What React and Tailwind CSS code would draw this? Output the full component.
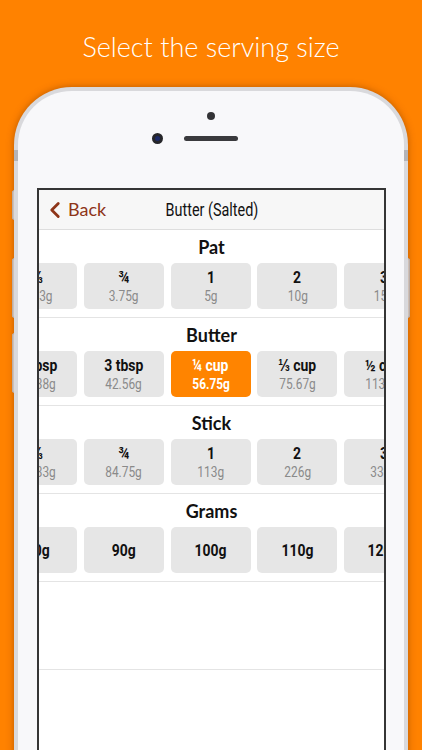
import { ChevronLeft } from "lucide-react";

const NARROW = { fontFamily: 'Roboto, "Liberation Sans", sans-serif' };
const ROUND = { fontFamily: 'Lato, "Noto Sans", sans-serif' };

const SECTIONS = [
  {
    name: "Pat",
    items: [
      { top: "⅔", sub: "3.33g" },
      { top: "¾", sub: "3.75g" },
      { top: "1", sub: "5g" },
      { top: "2", sub: "10g" },
      { top: "3", sub: "15g" },
    ],
  },
  {
    name: "Butter",
    items: [
      { top: "2 tbsp", sub: "28.38g" },
      { top: "3 tbsp", sub: "42.56g" },
      { top: "¼ cup", sub: "56.75g", active: true },
      { top: "⅓ cup", sub: "75.67g" },
      { top: "½ cup", sub: "113.5g" },
    ],
  },
  {
    name: "Stick",
    items: [
      { top: "⅔", sub: "75.33g" },
      { top: "¾", sub: "84.75g" },
      { top: "1", sub: "113g" },
      { top: "2", sub: "226g" },
      { top: "3", sub: "339g" },
    ],
  },
  {
    name: "Grams",
    items: [{ top: "80g" }, { top: "90g" }, { top: "100g" }, { top: "110g" }, { top: "120g" }],
  },
];

export default function App() {
  return (
    <div className="relative w-[422px] h-[750px] overflow-hidden bg-[#ff8200]">
      <div className="pt-[30px] h-[64px] text-center text-white text-[27px] leading-[34px] font-light" style={ROUND}>
        Select the serving size
      </div>

      {/* side buttons */}
      <span className="absolute left-[12px] top-[190px] w-[3px] h-[30px] rounded-l-[2px] bg-[#e9e9eb] border border-[#c9c9cc]" />
      <span className="absolute left-[12px] top-[258px] w-[3px] h-[60px] rounded-l-[2px] bg-[#e9e9eb] border border-[#c9c9cc]" />
      <span className="absolute left-[12px] top-[333px] w-[3px] h-[60px] rounded-l-[2px] bg-[#e9e9eb] border border-[#c9c9cc]" />
      <span className="absolute left-[407px] top-[258px] w-[3px] h-[60px] rounded-r-[2px] bg-[#e9e9eb] border border-[#c9c9cc]" />

      <div className="relative mt-[23px] ml-[14px] w-[394px] h-[700px] rounded-t-[58px] bg-[#d9d9dc] p-[4px] shadow-[0_0_7px_rgba(120,50,0,0.5)]">
        <span className="absolute left-0 top-[63px] w-[4px] h-[11px] bg-[#b4b4b8]" />
        <span className="absolute right-0 top-[63px] w-[4px] h-[11px] bg-[#b4b4b8]" />
        <div className="h-full rounded-t-[54px] bg-[#f8f8fa] flex flex-col">
          <div className="h-[97px] flex flex-col items-center">
            <div className="mt-[21px] w-[8px] h-[8px] rounded-full bg-[#333336]" />
            <div className="relative mt-[16px] w-[54px] h-[5px] rounded-full bg-[#3a3a3d]">
              <div className="absolute left-[-32px] top-[-3px] w-[11px] h-[11px] rounded-full bg-[#26262a] flex items-center justify-center">
                <div className="w-[5px] h-[5px] rounded-full bg-[#1d2a66]" />
              </div>
            </div>
          </div>

          <div className="ml-[19px] w-[349px] flex-1 border-2 border-b-0 border-[#353535] bg-white">
            <div className="relative h-[40px] bg-[#f7f7f7] border-b border-[#dedede] flex items-center justify-center">
              <div className="absolute left-[3px] top-0 h-full flex items-center text-[#8e3519]">
                <ChevronLeft className="w-[26px] h-[30px]" strokeWidth={2.6} />
                <span className="text-[18px]" style={ROUND}>Back</span>
              </div>
              <span className="inline-block text-[18px] text-[#111] scale-x-[0.8]" style={NARROW}>
                Butter (Salted)
              </span>
            </div>

            {SECTIONS.map((s) => (
              <div key={s.name} className="h-[88px] border-b border-[#e4e4e4]">
                <div className="h-[33px] pt-[1px] flex items-center justify-center text-[18px] font-bold text-[#111]" style={ROUND}>
                  {s.name}
                </div>
                <div className="overflow-hidden">
                  <div className="flex gap-[6.67px] ml-[-41.67px]">
                    {s.items.map((it) => (
                      <Chip key={it.top} {...it} />
                    ))}
                  </div>
                </div>
              </div>
            ))}
            <div className="h-[88px] border-b border-[#e4e4e4]" />
          </div>
        </div>
      </div>
    </div>
  );
}

function Chip({ top, sub, active }) {
  return (
    <div
      className={`w-[80px] h-[46px] shrink-0 rounded-[5px] flex flex-col items-center justify-center ${active ? "bg-[#ff8400] text-white" : "bg-[#e6e6e6] text-[#111]"}`}
      style={NARROW}
    >
      <div className="text-[17px] font-bold leading-[18px] whitespace-nowrap scale-x-[0.82]">{top}</div>
      {sub && (
        <div className={`text-[14px] leading-[16px] mt-[2px] whitespace-nowrap scale-x-[0.85] ${active ? "text-white font-bold" : "text-[#8a8a8a]"}`}>
          {sub}
        </div>
      )}
    </div>
  );
}
